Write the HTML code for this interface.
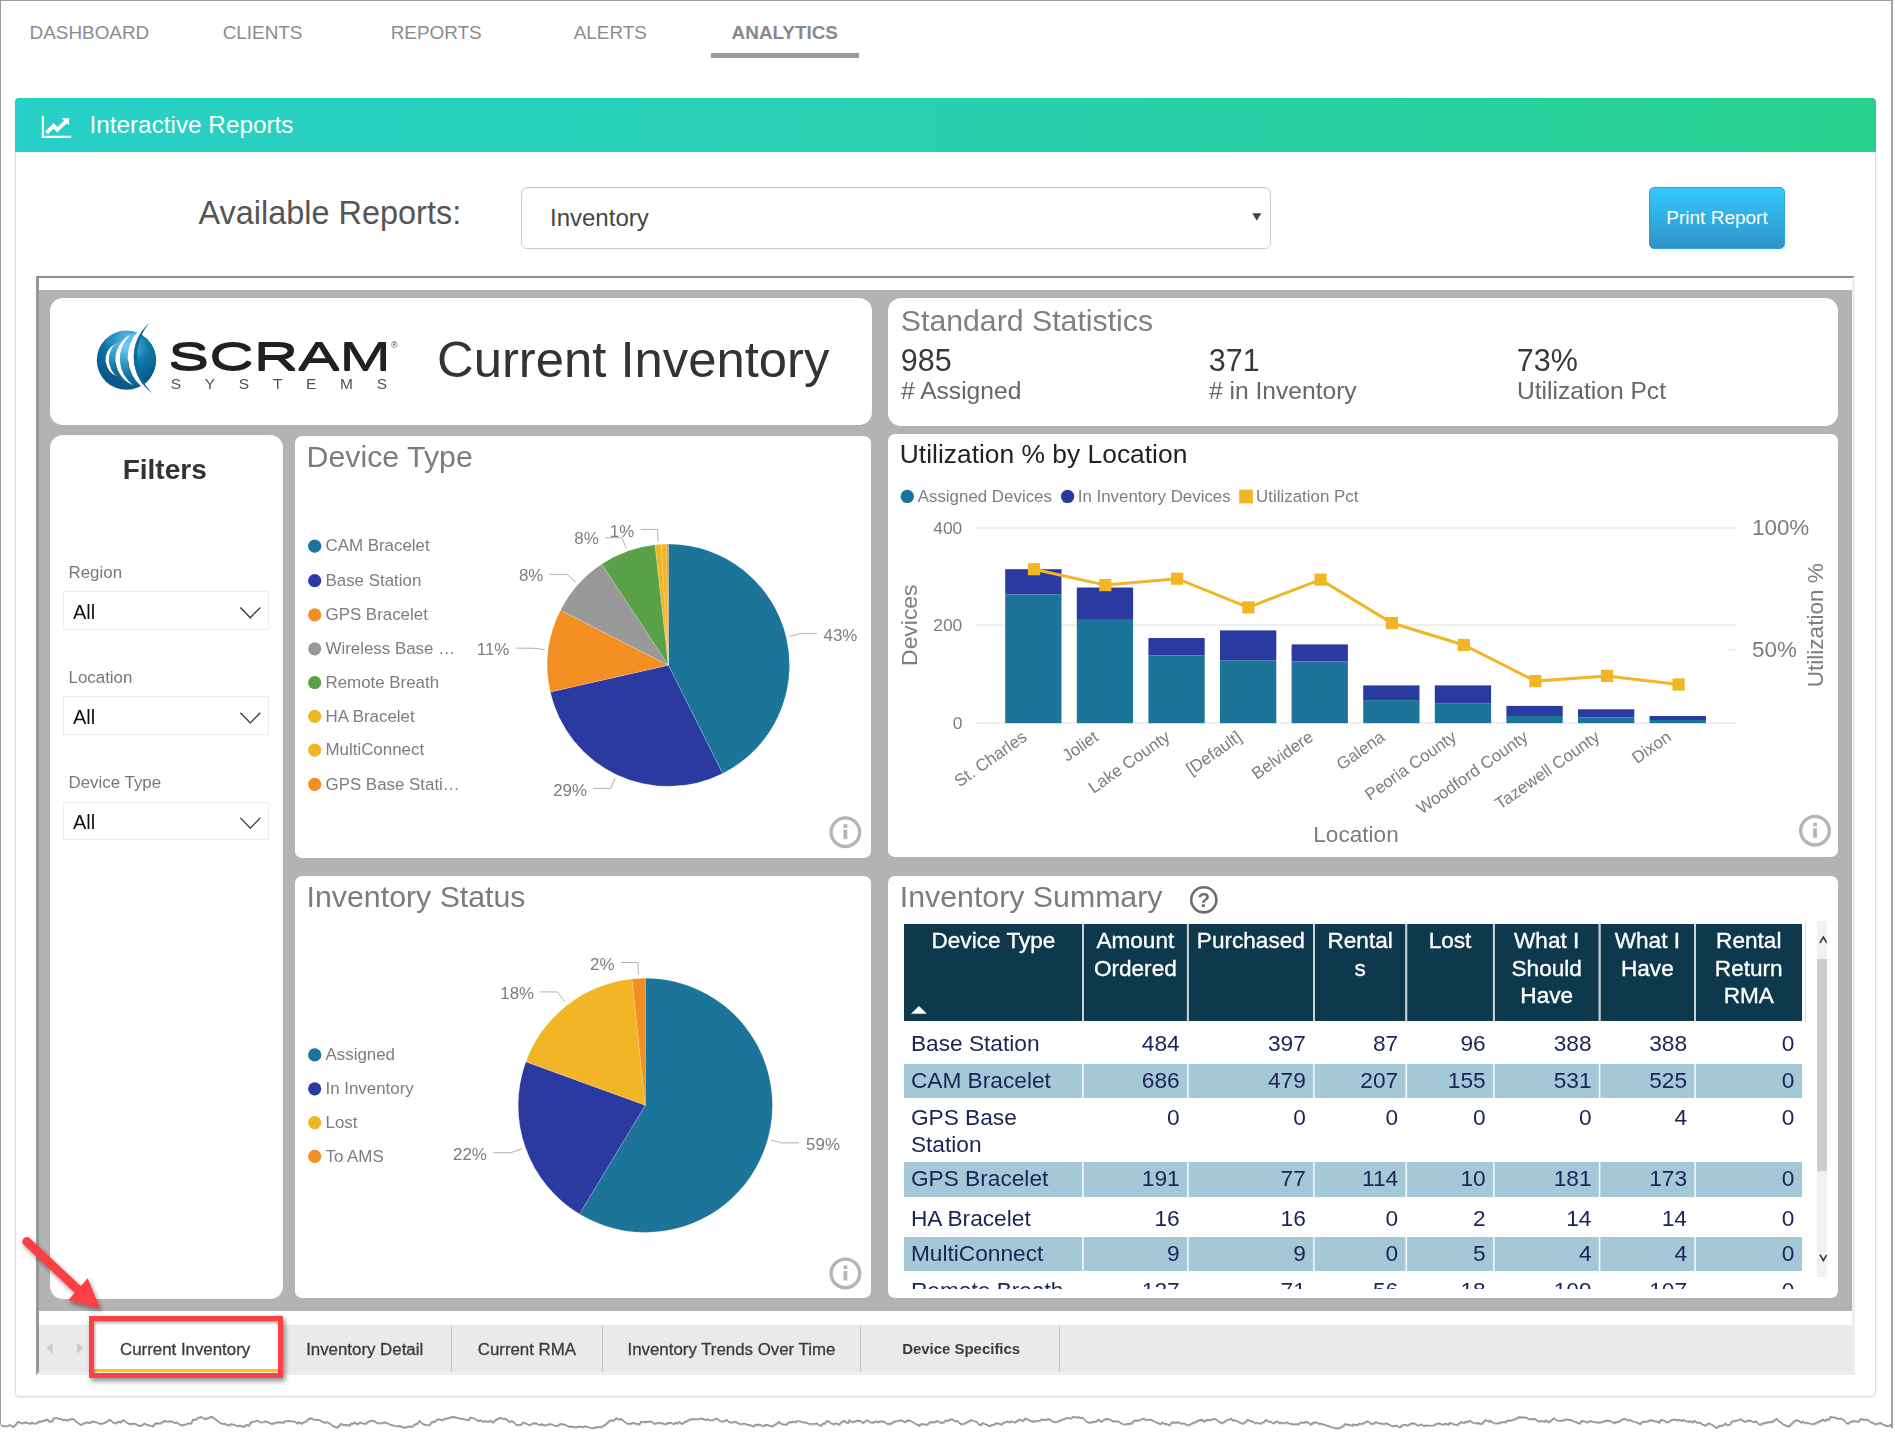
<!DOCTYPE html><html lang="en"><head><meta charset="utf-8"><title>Interactive Reports - Current Inventory</title>
<style>html,body{margin:0;padding:0;background:#fff;}body{width:1895px;height:1438px;position:relative;overflow:hidden;font-family:"Liberation Sans", sans-serif;}svg{position:absolute;left:0;top:0;overflow:visible}svg text{font-family:"Liberation Sans", sans-serif;}</style></head><body>
<div style="position:absolute;left:0.00px;top:0.00px;width:1.20px;height:1424.00px;background:#9a9a9a;"></div>
<div style="position:absolute;left:0.00px;top:0.00px;width:1892.00px;height:1.20px;background:#9a9a9a;"></div>
<div style="position:absolute;left:1891.00px;top:0.00px;width:2.00px;height:1427.00px;background:#a4a4a4;"></div>
<div style="position:absolute;top:22px;font-size:18.9px;line-height:21px;height:21px;color:#8c8c8c;white-space:nowrap;left:29.60px;">DASHBOARD</div>
<div style="position:absolute;top:22px;font-size:18.9px;line-height:21px;height:21px;color:#8c8c8c;white-space:nowrap;left:222.70px;">CLIENTS</div>
<div style="position:absolute;top:22px;font-size:18.9px;line-height:21px;height:21px;color:#8c8c8c;white-space:nowrap;left:390.70px;">REPORTS</div>
<div style="position:absolute;top:22px;font-size:18.9px;line-height:21px;height:21px;color:#8c8c8c;white-space:nowrap;left:573.70px;">ALERTS</div>
<div style="position:absolute;top:22px;font-size:18.9px;line-height:21px;height:21px;color:#888;white-space:nowrap;font-weight:700;left:731.60px;">ANALYTICS</div>
<div style="position:absolute;left:711.00px;top:53.00px;width:148.00px;height:5.00px;background:#999;"></div>
<div style="position:absolute;left:15.00px;top:98.00px;width:1861.00px;height:1299.00px;border:1px solid #ddd;box-sizing:border-box;border-radius:4px;box-shadow:0 1px 2px rgba(0,0,0,.06);"></div>
<div style="position:absolute;left:15.00px;top:98.00px;width:1861.00px;height:54.00px;background:linear-gradient(90deg,#27d0c8 0%,#27d1b0 50%,#27d28f 100%);border-radius:4px 4px 0 0;"></div>
<div style="position:absolute;top:111px;font-size:24.3px;line-height:27px;height:27px;color:#fff;white-space:nowrap;left:89.50px;">Interactive Reports</div>
<div style="position:absolute;top:195px;font-size:32.45px;line-height:36px;height:36px;color:#555;white-space:nowrap;left:198.50px;">Available Reports:</div>
<div style="position:absolute;left:521.00px;top:187.00px;width:750.00px;height:62.00px;border:1px solid #ccc;box-sizing:border-box;border-radius:6px;background:#fff;box-shadow:inset 0 1px 1px rgba(0,0,0,.05);"></div>
<div style="position:absolute;top:204px;font-size:24px;line-height:27px;height:27px;color:#444;white-space:nowrap;left:550.00px;">Inventory</div>
<div style="position:absolute;left:1649.00px;top:187.00px;width:136.00px;height:62.00px;background:linear-gradient(#33c9fd,#2f93c7);border-radius:5px;border:1px solid #2c9fd6;box-sizing:border-box;"></div>
<div style="position:absolute;top:207px;font-size:19px;line-height:21px;height:21px;color:#fff;white-space:nowrap;left:1217.00px;width:1000px;text-align:center;">Print Report</div>
<div style="position:absolute;left:0;top:0;width:1895px;height:1438px;will-change:transform;">
<div style="position:absolute;left:36.00px;top:276.00px;width:1819.00px;height:1099.00px;background:#fff;border-style:solid;border-width:2px 3px 3px 3px;border-color:#8f8f8f #efefef #efefef #979797;box-sizing:border-box;"></div>
<div style="position:absolute;left:39.00px;top:290.00px;width:1813.00px;height:1020.70px;background:#b3b3b3;"></div>
<div style="position:absolute;left:39.00px;top:1325.00px;width:1813.00px;height:47.20px;background:#eaeaea;"></div>
<div style="position:absolute;left:49.50px;top:297.70px;width:822.50px;height:127.30px;background:#fff;border-radius:13px;"></div>
<div style="position:absolute;left:888.00px;top:297.70px;width:950.30px;height:128.50px;background:#fff;border-radius:13px;"></div>
<div style="position:absolute;left:49.50px;top:435.00px;width:233.50px;height:864.00px;background:#fff;border-radius:13px;"></div>
<div style="position:absolute;left:295.20px;top:435.60px;width:575.90px;height:422.40px;background:#fff;border-radius:7px;"></div>
<div style="position:absolute;left:887.80px;top:433.90px;width:950.50px;height:423.10px;background:#fff;border-radius:7px;"></div>
<div style="position:absolute;left:295.20px;top:875.80px;width:575.90px;height:422.40px;background:#fff;border-radius:7px;"></div>
<div style="position:absolute;left:887.80px;top:875.80px;width:950.50px;height:422.40px;background:#fff;border-radius:7px;"></div>
<div style="position:absolute;left:167.6px;top:334px;font-size:39.5px;line-height:44px;color:#231f20;transform-origin:0 0;transform:scaleX(1.563);text-shadow:0 .8px 0 #231f20,0 -.8px 0 #231f20;white-space:nowrap;">SCRAM</div>
<div style="position:absolute;top:340px;font-size:8.5px;line-height:10px;height:10px;color:#444;white-space:nowrap;left:391.30px;">&reg;</div>
<div style="position:absolute;top:375px;font-size:15.5px;line-height:17px;height:17px;color:#505050;white-space:nowrap;left:170.80px;letter-spacing:23.7px;">SYSTEMS</div>
<div style="position:absolute;top:331px;font-size:50.8px;line-height:57px;height:57px;color:#333;white-space:nowrap;left:437.00px;">Current Inventory</div>
<div style="position:absolute;top:304px;font-size:30.25px;line-height:33px;height:33px;color:#808080;white-space:nowrap;left:900.80px;">Standard Statistics</div>
<div style="position:absolute;top:343px;font-size:30.5px;line-height:34px;height:34px;color:#383838;white-space:nowrap;left:900.80px;">985</div>
<div style="position:absolute;top:377px;font-size:24.6px;line-height:27px;height:27px;color:#666;white-space:nowrap;left:901.00px;"># Assigned</div>
<div style="position:absolute;top:343px;font-size:30.5px;line-height:34px;height:34px;color:#383838;white-space:nowrap;left:1208.80px;">371</div>
<div style="position:absolute;top:377px;font-size:24.6px;line-height:27px;height:27px;color:#666;white-space:nowrap;left:1209.00px;"># in Inventory</div>
<div style="position:absolute;top:343px;font-size:30.5px;line-height:34px;height:34px;color:#383838;white-space:nowrap;left:1516.80px;">73%</div>
<div style="position:absolute;top:377px;font-size:24.6px;line-height:27px;height:27px;color:#666;white-space:nowrap;left:1517.00px;">Utilization Pct</div>
<div style="position:absolute;top:454px;font-size:28px;line-height:31px;height:31px;color:#333;white-space:nowrap;font-weight:700;left:-335.30px;width:1000px;text-align:center;">Filters</div>
<div style="position:absolute;top:563px;font-size:16.9px;line-height:19px;height:19px;color:#777;white-space:nowrap;left:68.50px;">Region</div>
<div style="position:absolute;left:63.20px;top:591.20px;width:206.30px;height:38.80px;border:1.5px solid #ededed;box-sizing:border-box;background:#fff;"></div>
<div style="position:absolute;top:601px;font-size:20px;line-height:22px;height:22px;color:#111;white-space:nowrap;left:73.00px;">All</div>
<div style="position:absolute;top:668px;font-size:16.9px;line-height:19px;height:19px;color:#777;white-space:nowrap;left:68.50px;">Location</div>
<div style="position:absolute;left:63.20px;top:696.40px;width:206.30px;height:38.80px;border:1.5px solid #ededed;box-sizing:border-box;background:#fff;"></div>
<div style="position:absolute;top:706px;font-size:20px;line-height:22px;height:22px;color:#111;white-space:nowrap;left:73.00px;">All</div>
<div style="position:absolute;top:773px;font-size:16.9px;line-height:19px;height:19px;color:#777;white-space:nowrap;left:68.50px;">Device Type</div>
<div style="position:absolute;left:63.20px;top:801.60px;width:206.30px;height:38.80px;border:1.5px solid #ededed;box-sizing:border-box;background:#fff;"></div>
<div style="position:absolute;top:811px;font-size:20px;line-height:22px;height:22px;color:#111;white-space:nowrap;left:73.00px;">All</div>
<div style="position:absolute;top:440px;font-size:30.3px;line-height:33px;height:33px;color:#7c7c7c;white-space:nowrap;left:306.60px;">Device Type</div>
<div style="position:absolute;top:439px;font-size:26.4px;line-height:30px;height:30px;color:#222;white-space:nowrap;left:899.80px;">Utilization % by Location</div>
<div style="position:absolute;top:880px;font-size:30.3px;line-height:33px;height:33px;color:#7c7c7c;white-space:nowrap;left:306.60px;">Inventory Status</div>
<div style="position:absolute;top:880px;font-size:30.3px;line-height:33px;height:33px;color:#7c7c7c;white-space:nowrap;left:899.80px;">Inventory Summary</div>
<div style="position:absolute;left:904.00px;top:924.00px;width:898.40px;height:97.00px;background:#0e384b;"></div>
<div style="position:absolute;top:928px;font-size:22.6px;line-height:25px;height:25px;color:#fff;white-space:nowrap;left:493.45px;width:1000px;text-align:center;-webkit-text-stroke:0.35px #fff;">Device Type</div>
<div style="position:absolute;top:928px;font-size:22.6px;line-height:25px;height:25px;color:#fff;white-space:nowrap;left:635.35px;width:1000px;text-align:center;-webkit-text-stroke:0.35px #fff;">Amount</div>
<div style="position:absolute;top:956px;font-size:22.6px;line-height:25px;height:25px;color:#fff;white-space:nowrap;left:635.35px;width:1000px;text-align:center;-webkit-text-stroke:0.35px #fff;">Ordered</div>
<div style="position:absolute;top:928px;font-size:22.6px;line-height:25px;height:25px;color:#fff;white-space:nowrap;left:750.85px;width:1000px;text-align:center;-webkit-text-stroke:0.35px #fff;">Purchased</div>
<div style="position:absolute;top:928px;font-size:22.6px;line-height:25px;height:25px;color:#fff;white-space:nowrap;left:860.10px;width:1000px;text-align:center;-webkit-text-stroke:0.35px #fff;">Rental</div>
<div style="position:absolute;top:956px;font-size:22.6px;line-height:25px;height:25px;color:#fff;white-space:nowrap;left:860.10px;width:1000px;text-align:center;-webkit-text-stroke:0.35px #fff;">s</div>
<div style="position:absolute;top:928px;font-size:22.6px;line-height:25px;height:25px;color:#fff;white-space:nowrap;left:950.05px;width:1000px;text-align:center;-webkit-text-stroke:0.35px #fff;">Lost</div>
<div style="position:absolute;top:928px;font-size:22.6px;line-height:25px;height:25px;color:#fff;white-space:nowrap;left:1046.70px;width:1000px;text-align:center;-webkit-text-stroke:0.35px #fff;">What I</div>
<div style="position:absolute;top:956px;font-size:22.6px;line-height:25px;height:25px;color:#fff;white-space:nowrap;left:1046.70px;width:1000px;text-align:center;-webkit-text-stroke:0.35px #fff;">Should</div>
<div style="position:absolute;top:983px;font-size:22.6px;line-height:25px;height:25px;color:#fff;white-space:nowrap;left:1046.70px;width:1000px;text-align:center;-webkit-text-stroke:0.35px #fff;">Have</div>
<div style="position:absolute;top:928px;font-size:22.6px;line-height:25px;height:25px;color:#fff;white-space:nowrap;left:1147.35px;width:1000px;text-align:center;-webkit-text-stroke:0.35px #fff;">What I</div>
<div style="position:absolute;top:956px;font-size:22.6px;line-height:25px;height:25px;color:#fff;white-space:nowrap;left:1147.35px;width:1000px;text-align:center;-webkit-text-stroke:0.35px #fff;">Have</div>
<div style="position:absolute;top:928px;font-size:22.6px;line-height:25px;height:25px;color:#fff;white-space:nowrap;left:1248.75px;width:1000px;text-align:center;-webkit-text-stroke:0.35px #fff;">Rental</div>
<div style="position:absolute;top:956px;font-size:22.6px;line-height:25px;height:25px;color:#fff;white-space:nowrap;left:1248.75px;width:1000px;text-align:center;-webkit-text-stroke:0.35px #fff;">Return</div>
<div style="position:absolute;top:983px;font-size:22.6px;line-height:25px;height:25px;color:#fff;white-space:nowrap;left:1248.75px;width:1000px;text-align:center;-webkit-text-stroke:0.35px #fff;">RMA</div>
<div style="position:absolute;left:0;top:0;width:1895px;height:1289.1px;overflow:hidden;">
<div style="position:absolute;top:1030px;font-size:22.7px;line-height:26px;height:26px;color:#1a2456;white-space:nowrap;left:910.90px;">Base Station</div>
<div style="position:absolute;top:1030px;font-size:22.7px;line-height:26px;height:26px;color:#1a2456;white-space:nowrap;right:715.30px;text-align:right;">484</div>
<div style="position:absolute;top:1030px;font-size:22.7px;line-height:26px;height:26px;color:#1a2456;white-space:nowrap;right:589.20px;text-align:right;">397</div>
<div style="position:absolute;top:1030px;font-size:22.7px;line-height:26px;height:26px;color:#1a2456;white-space:nowrap;right:496.80px;text-align:right;">87</div>
<div style="position:absolute;top:1030px;font-size:22.7px;line-height:26px;height:26px;color:#1a2456;white-space:nowrap;right:409.30px;text-align:right;">96</div>
<div style="position:absolute;top:1030px;font-size:22.7px;line-height:26px;height:26px;color:#1a2456;white-space:nowrap;right:303.50px;text-align:right;">388</div>
<div style="position:absolute;top:1030px;font-size:22.7px;line-height:26px;height:26px;color:#1a2456;white-space:nowrap;right:208.00px;text-align:right;">388</div>
<div style="position:absolute;top:1030px;font-size:22.7px;line-height:26px;height:26px;color:#1a2456;white-space:nowrap;right:100.70px;text-align:right;">0</div>
<div style="position:absolute;left:904.00px;top:1063.90px;width:898.40px;height:34.00px;background:#a5c8d8;"></div>
<div style="position:absolute;top:1067px;font-size:22.7px;line-height:26px;height:26px;color:#1a2456;white-space:nowrap;left:910.90px;">CAM Bracelet</div>
<div style="position:absolute;top:1067px;font-size:22.7px;line-height:26px;height:26px;color:#1a2456;white-space:nowrap;right:715.30px;text-align:right;">686</div>
<div style="position:absolute;top:1067px;font-size:22.7px;line-height:26px;height:26px;color:#1a2456;white-space:nowrap;right:589.20px;text-align:right;">479</div>
<div style="position:absolute;top:1067px;font-size:22.7px;line-height:26px;height:26px;color:#1a2456;white-space:nowrap;right:496.80px;text-align:right;">207</div>
<div style="position:absolute;top:1067px;font-size:22.7px;line-height:26px;height:26px;color:#1a2456;white-space:nowrap;right:409.30px;text-align:right;">155</div>
<div style="position:absolute;top:1067px;font-size:22.7px;line-height:26px;height:26px;color:#1a2456;white-space:nowrap;right:303.50px;text-align:right;">531</div>
<div style="position:absolute;top:1067px;font-size:22.7px;line-height:26px;height:26px;color:#1a2456;white-space:nowrap;right:208.00px;text-align:right;">525</div>
<div style="position:absolute;top:1067px;font-size:22.7px;line-height:26px;height:26px;color:#1a2456;white-space:nowrap;right:100.70px;text-align:right;">0</div>
<div style="position:absolute;top:1104px;font-size:22.7px;line-height:26px;height:26px;color:#1a2456;white-space:nowrap;left:910.90px;">GPS Base</div>
<div style="position:absolute;top:1104px;font-size:22.7px;line-height:26px;height:26px;color:#1a2456;white-space:nowrap;right:715.30px;text-align:right;">0</div>
<div style="position:absolute;top:1104px;font-size:22.7px;line-height:26px;height:26px;color:#1a2456;white-space:nowrap;right:589.20px;text-align:right;">0</div>
<div style="position:absolute;top:1104px;font-size:22.7px;line-height:26px;height:26px;color:#1a2456;white-space:nowrap;right:496.80px;text-align:right;">0</div>
<div style="position:absolute;top:1104px;font-size:22.7px;line-height:26px;height:26px;color:#1a2456;white-space:nowrap;right:409.30px;text-align:right;">0</div>
<div style="position:absolute;top:1104px;font-size:22.7px;line-height:26px;height:26px;color:#1a2456;white-space:nowrap;right:303.50px;text-align:right;">0</div>
<div style="position:absolute;top:1104px;font-size:22.7px;line-height:26px;height:26px;color:#1a2456;white-space:nowrap;right:208.00px;text-align:right;">4</div>
<div style="position:absolute;top:1104px;font-size:22.7px;line-height:26px;height:26px;color:#1a2456;white-space:nowrap;right:100.70px;text-align:right;">0</div>
<div style="position:absolute;left:904.00px;top:1162.10px;width:898.40px;height:35.20px;background:#a5c8d8;"></div>
<div style="position:absolute;top:1165px;font-size:22.7px;line-height:26px;height:26px;color:#1a2456;white-space:nowrap;left:910.90px;">GPS Bracelet</div>
<div style="position:absolute;top:1165px;font-size:22.7px;line-height:26px;height:26px;color:#1a2456;white-space:nowrap;right:715.30px;text-align:right;">191</div>
<div style="position:absolute;top:1165px;font-size:22.7px;line-height:26px;height:26px;color:#1a2456;white-space:nowrap;right:589.20px;text-align:right;">77</div>
<div style="position:absolute;top:1165px;font-size:22.7px;line-height:26px;height:26px;color:#1a2456;white-space:nowrap;right:496.80px;text-align:right;">114</div>
<div style="position:absolute;top:1165px;font-size:22.7px;line-height:26px;height:26px;color:#1a2456;white-space:nowrap;right:409.30px;text-align:right;">10</div>
<div style="position:absolute;top:1165px;font-size:22.7px;line-height:26px;height:26px;color:#1a2456;white-space:nowrap;right:303.50px;text-align:right;">181</div>
<div style="position:absolute;top:1165px;font-size:22.7px;line-height:26px;height:26px;color:#1a2456;white-space:nowrap;right:208.00px;text-align:right;">173</div>
<div style="position:absolute;top:1165px;font-size:22.7px;line-height:26px;height:26px;color:#1a2456;white-space:nowrap;right:100.70px;text-align:right;">0</div>
<div style="position:absolute;top:1205px;font-size:22.7px;line-height:26px;height:26px;color:#1a2456;white-space:nowrap;left:910.90px;">HA Bracelet</div>
<div style="position:absolute;top:1205px;font-size:22.7px;line-height:26px;height:26px;color:#1a2456;white-space:nowrap;right:715.30px;text-align:right;">16</div>
<div style="position:absolute;top:1205px;font-size:22.7px;line-height:26px;height:26px;color:#1a2456;white-space:nowrap;right:589.20px;text-align:right;">16</div>
<div style="position:absolute;top:1205px;font-size:22.7px;line-height:26px;height:26px;color:#1a2456;white-space:nowrap;right:496.80px;text-align:right;">0</div>
<div style="position:absolute;top:1205px;font-size:22.7px;line-height:26px;height:26px;color:#1a2456;white-space:nowrap;right:409.30px;text-align:right;">2</div>
<div style="position:absolute;top:1205px;font-size:22.7px;line-height:26px;height:26px;color:#1a2456;white-space:nowrap;right:303.50px;text-align:right;">14</div>
<div style="position:absolute;top:1205px;font-size:22.7px;line-height:26px;height:26px;color:#1a2456;white-space:nowrap;right:208.00px;text-align:right;">14</div>
<div style="position:absolute;top:1205px;font-size:22.7px;line-height:26px;height:26px;color:#1a2456;white-space:nowrap;right:100.70px;text-align:right;">0</div>
<div style="position:absolute;left:904.00px;top:1237.20px;width:898.40px;height:33.50px;background:#a5c8d8;"></div>
<div style="position:absolute;top:1240px;font-size:22.7px;line-height:26px;height:26px;color:#1a2456;white-space:nowrap;left:910.90px;">MultiConnect</div>
<div style="position:absolute;top:1240px;font-size:22.7px;line-height:26px;height:26px;color:#1a2456;white-space:nowrap;right:715.30px;text-align:right;">9</div>
<div style="position:absolute;top:1240px;font-size:22.7px;line-height:26px;height:26px;color:#1a2456;white-space:nowrap;right:589.20px;text-align:right;">9</div>
<div style="position:absolute;top:1240px;font-size:22.7px;line-height:26px;height:26px;color:#1a2456;white-space:nowrap;right:496.80px;text-align:right;">0</div>
<div style="position:absolute;top:1240px;font-size:22.7px;line-height:26px;height:26px;color:#1a2456;white-space:nowrap;right:409.30px;text-align:right;">5</div>
<div style="position:absolute;top:1240px;font-size:22.7px;line-height:26px;height:26px;color:#1a2456;white-space:nowrap;right:303.50px;text-align:right;">4</div>
<div style="position:absolute;top:1240px;font-size:22.7px;line-height:26px;height:26px;color:#1a2456;white-space:nowrap;right:208.00px;text-align:right;">4</div>
<div style="position:absolute;top:1240px;font-size:22.7px;line-height:26px;height:26px;color:#1a2456;white-space:nowrap;right:100.70px;text-align:right;">0</div>
<div style="position:absolute;top:1277px;font-size:22.7px;line-height:26px;height:26px;color:#1a2456;white-space:nowrap;left:910.90px;">Remote Breath</div>
<div style="position:absolute;top:1277px;font-size:22.7px;line-height:26px;height:26px;color:#1a2456;white-space:nowrap;right:715.30px;text-align:right;">127</div>
<div style="position:absolute;top:1277px;font-size:22.7px;line-height:26px;height:26px;color:#1a2456;white-space:nowrap;right:589.20px;text-align:right;">71</div>
<div style="position:absolute;top:1277px;font-size:22.7px;line-height:26px;height:26px;color:#1a2456;white-space:nowrap;right:496.80px;text-align:right;">56</div>
<div style="position:absolute;top:1277px;font-size:22.7px;line-height:26px;height:26px;color:#1a2456;white-space:nowrap;right:409.30px;text-align:right;">18</div>
<div style="position:absolute;top:1277px;font-size:22.7px;line-height:26px;height:26px;color:#1a2456;white-space:nowrap;right:303.50px;text-align:right;">109</div>
<div style="position:absolute;top:1277px;font-size:22.7px;line-height:26px;height:26px;color:#1a2456;white-space:nowrap;right:208.00px;text-align:right;">107</div>
<div style="position:absolute;top:1277px;font-size:22.7px;line-height:26px;height:26px;color:#1a2456;white-space:nowrap;right:100.70px;text-align:right;">0</div>
<div style="position:absolute;top:1131px;font-size:22.7px;line-height:26px;height:26px;color:#1a2456;white-space:nowrap;left:910.90px;">Station</div>
</div>
<div style="position:absolute;left:1804.80px;top:921.10px;width:1.00px;height:100.90px;background:#d3dade;"></div>
<div style="position:absolute;left:1817.20px;top:921.10px;width:9.60px;height:355.80px;background:#f1f1f1;"></div>
<div style="position:absolute;left:1817.20px;top:959.10px;width:9.60px;height:212.20px;background:#cdcdcd;"></div>
<div style="position:absolute;left:94.00px;top:1321.60px;width:184.20px;height:50.60px;background:#fff;"></div>
<div style="position:absolute;left:94.00px;top:1369.20px;width:184.20px;height:3.00px;background:#f2c811;"></div>
<div style="position:absolute;top:1340px;font-size:16.85px;line-height:19px;height:19px;color:#3b3b3b;white-space:nowrap;left:-314.90px;width:1000px;text-align:center;-webkit-text-stroke:0.3px #3b3b3b;">Current Inventory</div>
<div style="position:absolute;top:1340px;font-size:16.85px;line-height:19px;height:19px;color:#3b3b3b;white-space:nowrap;left:-135.35px;width:1000px;text-align:center;-webkit-text-stroke:0.3px #3b3b3b;">Inventory Detail</div>
<div style="position:absolute;top:1340px;font-size:16.85px;line-height:19px;height:19px;color:#3b3b3b;white-space:nowrap;left:26.90px;width:1000px;text-align:center;-webkit-text-stroke:0.3px #3b3b3b;">Current RMA</div>
<div style="position:absolute;top:1340px;font-size:16.85px;line-height:19px;height:19px;color:#3b3b3b;white-space:nowrap;left:231.45px;width:1000px;text-align:center;-webkit-text-stroke:0.3px #3b3b3b;">Inventory Trends Over Time</div>
<div style="position:absolute;top:1340px;font-size:14.95px;line-height:17px;height:17px;color:#3b3b3b;white-space:nowrap;font-weight:700;left:461.20px;width:1000px;text-align:center;">Device Specifics</div>
<div style="position:absolute;left:450.70px;top:1324.80px;width:1.00px;height:46.90px;background:#c6c6c6;"></div>
<div style="position:absolute;left:602.00px;top:1324.80px;width:1.00px;height:46.90px;background:#c6c6c6;"></div>
<div style="position:absolute;left:860.00px;top:1324.80px;width:1.00px;height:46.90px;background:#c6c6c6;"></div>
<div style="position:absolute;left:1059.30px;top:1324.80px;width:1.00px;height:46.90px;background:#c6c6c6;"></div>
<div style="position:absolute;left:89.00px;top:1315.80px;width:194.20px;height:62.60px;border:5px solid #fb4145;box-sizing:border-box;box-shadow:2px 3px 5px rgba(0,0,0,.45), inset 1px 2px 3px rgba(0,0,0,.35);"></div>
<svg width="1895" height="1438" viewBox="0 0 1895 1438">
<defs>
<filter id="sh" x="-30%" y="-30%" width="160%" height="160%"><feDropShadow dx="1.5" dy="2.5" stdDeviation="2" flood-color="#000" flood-opacity=".45"/></filter>
</defs>
<g fill="none" stroke="#fff"><path d="M42.85 115.8V136.9H71.05" stroke-width="2.2"/><path d="M46.4 133L53.7 125.9L57.2 129.8L66.4 121.1" stroke-width="3.9"/></g><path d="M61.7 118.2H69.05V125.3Z" fill="#fff"/>
<path d="M1252.3 213.3H1261.3L1256.8 220.8Z" fill="#444"/>
<path d="M240.4 607.5L250.3 617.7L260.3 607.5" fill="none" stroke="#333" stroke-width="1.3"/>
<path d="M240.4 712.7L250.3 722.9L260.3 712.7" fill="none" stroke="#333" stroke-width="1.3"/>
<path d="M240.4 817.9L250.3 828.1L260.3 817.9" fill="none" stroke="#333" stroke-width="1.3"/>
<defs>
<radialGradient id="sph" gradientUnits="userSpaceOnUse" cx="127" cy="338" r="44"><stop offset="0" stop-color="#58b8e5"/><stop offset="0.3" stop-color="#2f94c6"/><stop offset="0.62" stop-color="#0a6c9b"/><stop offset="1" stop-color="#065a86"/></radialGradient>
<linearGradient id="band" gradientUnits="userSpaceOnUse" x1="0" y1="334" x2="0" y2="386"><stop offset="0" stop-color="#58bdea"/><stop offset="0.25" stop-color="#6ccbf5"/><stop offset="0.52" stop-color="#3a9fce"/><stop offset="0.78" stop-color="#1175a5"/><stop offset="1" stop-color="#086593"/></linearGradient>
<linearGradient id="band1" gradientUnits="userSpaceOnUse" x1="0" y1="344" x2="0" y2="380"><stop offset="0" stop-color="#4fb4e2"/><stop offset="0.4" stop-color="#2b92c4"/><stop offset="0.72" stop-color="#0e6e9e"/><stop offset="1" stop-color="#086593"/></linearGradient>
<radialGradient id="lens" gradientUnits="userSpaceOnUse" cx="134" cy="348" r="34"><stop offset="0" stop-color="#4aa9d4"/><stop offset="0.45" stop-color="#0f78a6"/><stop offset="1" stop-color="#045a85"/></radialGradient>
<clipPath id="cc"><circle cx="126.4" cy="360.2" r="29.6"/></clipPath>
</defs>
<circle cx="126.4" cy="360.2" r="29.6" fill="url(#sph)"/>
<g clip-path="url(#cc)">
<path d="M115.1 344A22.25 22.25 0 0 0 117.2 376.8L133.8 385.7A27.9 27.9 0 0 1 130.8 334.5Z" fill="url(#band1)"/>
<path d="M130.8 334.5A32.7 32.7 0 0 0 133.8 385.7L140.6 386A38.1 38.1 0 0 1 137.3 332.1Z" fill="url(#band)"/>
<path d="M149.7 322.4A45.3 45.3 0 0 0 152.7 393.7L175 394L175 322Z" fill="url(#lens)"/>
<path d="M115.1 344A18 18 0 0 0 117.2 376.8A22.25 22.25 0 0 1 115.1 344Z" fill="#fff"/>
<path d="M130.8 334.5A27.9 27.9 0 0 0 133.8 385.7A32.7 32.7 0 0 1 130.8 334.5Z" fill="#fff"/>
<path d="M137.3 332.1A38.1 38.1 0 0 0 140.6 386L152.7 393.7A45.3 45.3 0 0 1 149.7 322.4Z" fill="#fff"/>
<path d="M105.6 363A18 18 0 0 0 117.2 376.8" fill="none" stroke="#1a1a1a" stroke-width=".6" opacity=".75"/>
<path d="M115.5 363A27.9 27.9 0 0 0 133.8 385.7" fill="none" stroke="#1a1a1a" stroke-width=".6" opacity=".75"/>
<path d="M128 361A38.1 38.1 0 0 0 140.6 386" fill="none" stroke="#1a1a1a" stroke-width=".6" opacity=".75"/>
</g>
<path d="M149.7 322.4A45.3 45.3 0 0 0 152.7 393.7A52.5 52.5 0 0 1 149.7 322.4Z" fill="#0b6b9a"/>
<path d="M668.40 665.20L668.40 544.10A121.1 121.1 0 0 1 722.62 773.48Z" fill="#1c7598" stroke="#fff" stroke-opacity=".3" stroke-width=".6"/>
<path d="M668.40 665.20L722.62 773.48A121.1 121.1 0 0 1 550.31 692.03Z" fill="#2b3aa1" stroke="#fff" stroke-opacity=".3" stroke-width=".6"/>
<path d="M668.40 665.20L550.31 692.03A121.1 121.1 0 0 1 560.50 610.22Z" fill="#f28e22" stroke="#fff" stroke-opacity=".3" stroke-width=".6"/>
<path d="M668.40 665.20L560.50 610.22A121.1 121.1 0 0 1 601.74 564.10Z" fill="#999999" stroke="#fff" stroke-opacity=".3" stroke-width=".6"/>
<path d="M668.40 665.20L601.74 564.10A121.1 121.1 0 0 1 655.11 544.83Z" fill="#5aa046" stroke="#fff" stroke-opacity=".3" stroke-width=".6"/>
<path d="M668.40 665.20L655.11 544.83A121.1 121.1 0 0 1 661.22 544.31Z" fill="#f2b525" stroke="#fff" stroke-opacity=".3" stroke-width=".6"/>
<path d="M668.40 665.20L661.22 544.31A121.1 121.1 0 0 1 666.71 544.11Z" fill="#f2b525" stroke="#fff" stroke-opacity=".3" stroke-width=".6"/>
<path d="M668.40 665.20L666.71 544.11A121.1 121.1 0 0 1 668.40 544.10Z" fill="#f28e22" stroke="#fff" stroke-opacity=".3" stroke-width=".6"/>
<path d="M645.30 1105.30L645.30 978.20A127.1 127.1 0 1 1 579.46 1214.02Z" fill="#1c7598" stroke="#fff" stroke-opacity=".3" stroke-width=".6"/>
<path d="M645.30 1105.30L579.46 1214.02A127.1 127.1 0 0 1 525.87 1061.83Z" fill="#2b3aa1" stroke="#fff" stroke-opacity=".3" stroke-width=".6"/>
<path d="M645.30 1105.30L525.87 1061.83A127.1 127.1 0 0 1 632.01 978.90Z" fill="#f2b525" stroke="#fff" stroke-opacity=".3" stroke-width=".6"/>
<path d="M645.30 1105.30L632.01 978.90A127.1 127.1 0 0 1 645.30 978.20Z" fill="#f28e22" stroke="#fff" stroke-opacity=".3" stroke-width=".6"/>
<path d="M789.3 636.4L800.4 633.6L817.2 633.6" fill="none" stroke="#b0b0b0" stroke-width="1"/>
<text x="823.5" y="641.1" font-size="16.9" fill="#7d7d7d" text-anchor="start">43%</text>
<path d="M615.2 778.3L610.7 788.4L593.3 788.4" fill="none" stroke="#b0b0b0" stroke-width="1"/>
<text x="587.0" y="795.6" font-size="16.9" fill="#7d7d7d" text-anchor="end">29%</text>
<path d="M544.9 649.7L533.2 648.2L516.1 648.2" fill="none" stroke="#b0b0b0" stroke-width="1"/>
<text x="509.4" y="655.0" font-size="16.9" fill="#7d7d7d" text-anchor="end">11%</text>
<path d="M575.9 582.3L567.4 574.4L549.6 574.4" fill="none" stroke="#b0b0b0" stroke-width="1"/>
<text x="543.3" y="581.2" font-size="16.9" fill="#7d7d7d" text-anchor="end">8%</text>
<path d="M626.3 548.1L621.8 537.7L605.0 537.7" fill="none" stroke="#b0b0b0" stroke-width="1"/>
<text x="598.7" y="544.2" font-size="16.9" fill="#7d7d7d" text-anchor="end">8%</text>
<path d="M658.2 541.5L657.6 529.4L640.8 529.4" fill="none" stroke="#b0b0b0" stroke-width="1"/>
<text x="634.2" y="536.6" font-size="16.9" fill="#7d7d7d" text-anchor="end">1%</text>
<path d="M771.0 1140.1L781.7 1142.9L799.1 1142.9" fill="none" stroke="#b0b0b0" stroke-width="1"/>
<text x="806.1" y="1150.1" font-size="16.9" fill="#7d7d7d" text-anchor="start">59%</text>
<path d="M522.1 1148.6L510.7 1152.7L493.3 1152.7" fill="none" stroke="#b0b0b0" stroke-width="1"/>
<text x="486.9" y="1160.2" font-size="16.9" fill="#7d7d7d" text-anchor="end">22%</text>
<path d="M564.8 1001.7L557.5 991.9L540.1 991.9" fill="none" stroke="#b0b0b0" stroke-width="1"/>
<text x="534.1" y="999.1" font-size="16.9" fill="#7d7d7d" text-anchor="end">18%</text>
<path d="M638.3 974.5L638.0 962.5L620.9 962.5" fill="none" stroke="#b0b0b0" stroke-width="1"/>
<text x="614.5" y="969.6" font-size="16.9" fill="#7d7d7d" text-anchor="end">2%</text>
<circle cx="314.7" cy="546.2" r="6.6" fill="#1c7598"/><text x="325.5" y="551.4" font-size="16.9" fill="#7d7d7d">CAM Bracelet</text>
<circle cx="314.7" cy="580.7" r="6.6" fill="#2b3aa1"/><text x="325.5" y="585.9" font-size="16.9" fill="#7d7d7d">Base Station</text>
<circle cx="314.7" cy="614.9" r="6.6" fill="#f28e22"/><text x="325.5" y="620.1" font-size="16.9" fill="#7d7d7d">GPS Bracelet</text>
<circle cx="314.7" cy="648.8" r="6.6" fill="#999999"/><text x="325.5" y="654.0" font-size="16.9" fill="#7d7d7d">Wireless Base …</text>
<circle cx="314.7" cy="682.7" r="6.6" fill="#5aa046"/><text x="325.5" y="687.9" font-size="16.9" fill="#7d7d7d">Remote Breath</text>
<circle cx="314.7" cy="716.3" r="6.6" fill="#f2b525"/><text x="325.5" y="721.5" font-size="16.9" fill="#7d7d7d">HA Bracelet</text>
<circle cx="314.7" cy="750.1" r="6.6" fill="#f2b525"/><text x="325.5" y="755.3" font-size="16.9" fill="#7d7d7d">MultiConnect</text>
<circle cx="314.7" cy="784.3" r="6.6" fill="#f28e22"/><text x="325.5" y="789.5" font-size="16.9" fill="#7d7d7d">GPS Base Stati…</text>
<circle cx="314.7" cy="1054.9" r="6.6" fill="#1c7598"/><text x="325.5" y="1060.1" font-size="16.9" fill="#7d7d7d">Assigned</text>
<circle cx="314.7" cy="1088.8" r="6.6" fill="#2b3aa1"/><text x="325.5" y="1094.0" font-size="16.9" fill="#7d7d7d">In Inventory</text>
<circle cx="314.7" cy="1122.7" r="6.6" fill="#f2b525"/><text x="325.5" y="1127.9" font-size="16.9" fill="#7d7d7d">Lost</text>
<circle cx="314.7" cy="1156.3" r="6.6" fill="#f28e22"/><text x="325.5" y="1161.5" font-size="16.9" fill="#7d7d7d">To AMS</text>
<circle cx="845.4" cy="832.2" r="14.3" fill="none" stroke="#b5b5b5" stroke-width="3.4"/><rect x="843.5" y="829.7" width="3.8" height="9.5" fill="#b5b5b5"/><rect x="843.5" y="824.2" width="3.8" height="3.6" fill="#b5b5b5"/>
<circle cx="845.4" cy="1273.4" r="14.3" fill="none" stroke="#b5b5b5" stroke-width="3.4"/><rect x="843.5" y="1270.9" width="3.8" height="9.5" fill="#b5b5b5"/><rect x="843.5" y="1265.4" width="3.8" height="3.6" fill="#b5b5b5"/>
<circle cx="1815" cy="830.7" r="14.3" fill="none" stroke="#b5b5b5" stroke-width="3.4"/><rect x="1813.1" y="828.2" width="3.8" height="9.5" fill="#b5b5b5"/><rect x="1813.1" y="822.7" width="3.8" height="3.6" fill="#b5b5b5"/>
<circle cx="1203.8" cy="899.8" r="12.6" fill="none" stroke="#6e6e6e" stroke-width="2.6"/><text x="1203.8" y="907.2" font-size="20.5" font-weight="700" fill="#6e6e6e" text-anchor="middle">?</text>
<circle cx="907.3" cy="496.4" r="6.7" fill="#1c7598"/><text x="917.7" y="501.9" font-size="16.9" fill="#7d7d7d">Assigned Devices</text>
<circle cx="1067.6" cy="496.4" r="6.7" fill="#2b3aa1"/><text x="1077.7" y="501.9" font-size="16.9" fill="#7d7d7d">In Inventory Devices</text>
<rect x="1239.2" y="489.7" width="13.7" height="13.7" fill="#f2b525"/><text x="1256.1" y="501.9" font-size="16.9" fill="#7d7d7d">Utilization Pct</text>
<rect x="976.2" y="527.4" width="759.8" height="1.2" fill="#e6e6e6"/>
<rect x="976.2" y="624.5" width="759.8" height="1.2" fill="#e6e6e6"/>
<rect x="976.2" y="722.5" width="759.8" height="1.2" fill="#e6e6e6"/>
<rect x="1727.5" y="649" width="8.5" height="1.2" fill="#e6e6e6"/>
<text x="962.3" y="534.4" font-size="17.4" fill="#7d7d7d" text-anchor="end">400</text>
<text x="962.3" y="631.4" font-size="17.4" fill="#7d7d7d" text-anchor="end">200</text>
<text x="962.3" y="729.4" font-size="17.4" fill="#7d7d7d" text-anchor="end">0</text>
<text x="1752" y="535.1" font-size="22.4" fill="#7d7d7d">100%</text>
<text x="1752" y="656.8" font-size="22.4" fill="#7d7d7d">50%</text>
<text transform="translate(917.3 625.2) rotate(-90)" font-size="22.9" fill="#7d7d7d" text-anchor="middle">Devices</text>
<text transform="translate(1823.2 625.2) rotate(-90)" font-size="22.6" fill="#7d7d7d" text-anchor="middle">Utilization %</text>
<text x="1356" y="842.4" font-size="22.6" fill="#7d7d7d" text-anchor="middle">Location</text>
<rect x="1005.2" y="569.2" width="56.3" height="25.4" fill="#2b3aa1"/><rect x="1005.2" y="594.6" width="56.3" height="128.5" fill="#1c7598"/>
<text transform="translate(1028.0 739.5) rotate(-35)" font-size="16.9" fill="#7d7d7d" text-anchor="end">St. Charles</text>
<rect x="1076.8" y="587.5" width="56.3" height="31.5" fill="#2b3aa1"/><rect x="1076.8" y="619.0" width="56.3" height="104.1" fill="#1c7598"/>
<text transform="translate(1099.6 739.5) rotate(-35)" font-size="16.9" fill="#7d7d7d" text-anchor="end">Joliet</text>
<rect x="1148.4" y="638.0" width="56.3" height="17.5" fill="#2b3aa1"/><rect x="1148.4" y="655.5" width="56.3" height="67.6" fill="#1c7598"/>
<text transform="translate(1171.2 739.5) rotate(-35)" font-size="16.9" fill="#7d7d7d" text-anchor="end">Lake County</text>
<rect x="1220.0" y="630.4" width="56.3" height="29.9" fill="#2b3aa1"/><rect x="1220.0" y="660.3" width="56.3" height="62.8" fill="#1c7598"/>
<text transform="translate(1242.8 739.5) rotate(-35)" font-size="16.9" fill="#7d7d7d" text-anchor="end">[Default]</text>
<rect x="1291.6" y="644.4" width="56.3" height="16.9" fill="#2b3aa1"/><rect x="1291.6" y="661.3" width="56.3" height="61.8" fill="#1c7598"/>
<text transform="translate(1314.4 739.5) rotate(-35)" font-size="16.9" fill="#7d7d7d" text-anchor="end">Belvidere</text>
<rect x="1363.2" y="685.4" width="56.3" height="14.7" fill="#2b3aa1"/><rect x="1363.2" y="700.1" width="56.3" height="23.0" fill="#1c7598"/>
<text transform="translate(1386.0 739.5) rotate(-35)" font-size="16.9" fill="#7d7d7d" text-anchor="end">Galena</text>
<rect x="1434.8" y="685.4" width="56.3" height="17.8" fill="#2b3aa1"/><rect x="1434.8" y="703.2" width="56.3" height="19.9" fill="#1c7598"/>
<text transform="translate(1457.6 739.5) rotate(-35)" font-size="16.9" fill="#7d7d7d" text-anchor="end">Peoria County</text>
<rect x="1506.4" y="705.9" width="56.3" height="10.1" fill="#2b3aa1"/><rect x="1506.4" y="716" width="56.3" height="7.1" fill="#1c7598"/>
<text transform="translate(1529.2 739.5) rotate(-35)" font-size="16.9" fill="#7d7d7d" text-anchor="end">Woodford County</text>
<rect x="1578.0" y="709.3" width="56.3" height="8.2" fill="#2b3aa1"/><rect x="1578.0" y="717.5" width="56.3" height="5.6" fill="#1c7598"/>
<text transform="translate(1600.8 739.5) rotate(-35)" font-size="16.9" fill="#7d7d7d" text-anchor="end">Tazewell County</text>
<rect x="1649.6" y="716" width="56.3" height="4.0" fill="#2b3aa1"/><rect x="1649.6" y="720" width="56.3" height="3.1" fill="#1c7598"/>
<text transform="translate(1672.4 739.5) rotate(-35)" font-size="16.9" fill="#7d7d7d" text-anchor="end">Dixon</text>
<path d="M1034 569.2L1105.3 585.1L1177.1 578.7L1248.4 607.4L1320.6 579.6L1391.9 623L1463.8 645L1535.4 681.1L1607 675.9L1678.6 684.5" fill="none" stroke="#f2b525" stroke-width="3"/>
<rect x="1027.9" y="563.1" width="12.2" height="12.2" fill="#f2b525"/>
<rect x="1099.2" y="579.0" width="12.2" height="12.2" fill="#f2b525"/>
<rect x="1171.0" y="572.6" width="12.2" height="12.2" fill="#f2b525"/>
<rect x="1242.3000000000002" y="601.3" width="12.2" height="12.2" fill="#f2b525"/>
<rect x="1314.5" y="573.5" width="12.2" height="12.2" fill="#f2b525"/>
<rect x="1385.8000000000002" y="616.9" width="12.2" height="12.2" fill="#f2b525"/>
<rect x="1457.7" y="638.9" width="12.2" height="12.2" fill="#f2b525"/>
<rect x="1529.3000000000002" y="675.0" width="12.2" height="12.2" fill="#f2b525"/>
<rect x="1600.9" y="669.8" width="12.2" height="12.2" fill="#f2b525"/>
<rect x="1672.5" y="678.4" width="12.2" height="12.2" fill="#f2b525"/>
<rect x="1082.00" y="921" width="1.8" height="103" fill="#f3f5f6"/><rect x="1082.15" y="924" width="1.5" height="97" fill="#c6d0d5"/><rect x="1082.15" y="1024" width="1.5" height="265" fill="#fff" fill-opacity=".92"/>
<rect x="1186.90" y="921" width="1.8" height="103" fill="#f3f5f6"/><rect x="1187.05" y="924" width="1.5" height="97" fill="#c6d0d5"/><rect x="1187.05" y="1024" width="1.5" height="265" fill="#fff" fill-opacity=".92"/>
<rect x="1313.00" y="921" width="1.8" height="103" fill="#f3f5f6"/><rect x="1313.15" y="924" width="1.5" height="97" fill="#c6d0d5"/><rect x="1313.15" y="1024" width="1.5" height="265" fill="#fff" fill-opacity=".92"/>
<rect x="1405.40" y="921" width="1.8" height="103" fill="#f3f5f6"/><rect x="1405.55" y="924" width="1.5" height="97" fill="#c6d0d5"/><rect x="1405.55" y="1024" width="1.5" height="265" fill="#fff" fill-opacity=".92"/>
<rect x="1492.90" y="921" width="1.8" height="103" fill="#f3f5f6"/><rect x="1493.05" y="924" width="1.5" height="97" fill="#c6d0d5"/><rect x="1493.05" y="1024" width="1.5" height="265" fill="#fff" fill-opacity=".92"/>
<rect x="1598.70" y="921" width="1.8" height="103" fill="#f3f5f6"/><rect x="1598.85" y="924" width="1.5" height="97" fill="#c6d0d5"/><rect x="1598.85" y="1024" width="1.5" height="265" fill="#fff" fill-opacity=".92"/>
<rect x="1694.20" y="921" width="1.8" height="103" fill="#f3f5f6"/><rect x="1694.35" y="924" width="1.5" height="97" fill="#c6d0d5"/><rect x="1694.35" y="1024" width="1.5" height="265" fill="#fff" fill-opacity=".92"/>
<path d="M911 1013.8L919 1006.1L926.9 1013.8Z" fill="#fff"/>
<clipPath id="sbc"><rect x="1817.2" y="921" width="9.6" height="356"/></clipPath><g clip-path="url(#sbc)"><path d="M1819.9 943L1823.4 937.1L1826.9 943" fill="none" stroke="#383838" stroke-width="1.6"/><path d="M1819.9 1254.6L1823.4 1260.5L1826.9 1254.6" fill="none" stroke="#383838" stroke-width="1.6"/></g>
<path d="M52.6 1342.8L46.6 1348.2L52.6 1353.7Z" fill="#cacaca"/><path d="M77 1342.8L83 1348.2L77 1353.7Z" fill="#cacaca"/>
<g filter="url(#sh)"><path d="M26.8 1241.5L80 1291.5" stroke="#fb4145" stroke-width="9" stroke-linecap="round" fill="none"/><path d="M100.3 1309L87.7 1278.2L68.2 1300.3Z" fill="#fb4145"/></g>
<path d="M0.5 1424.5L2.8 1425.9L5.1 1425.9L6.7 1426.1L9.8 1424.9L11.3 1425.4L12.6 1426.9L15.3 1425.1L16.6 1423.2L18.2 1421.4L20.5 1423.0L23.0 1423.0L25.8 1422.2L29.4 1423.6L32.3 1422.5L34.2 1423.6L36.3 1423.1L39.8 1421.2L41.5 1421.4L45.1 1420.0L47.8 1419.5L49.2 1421.8L52.2 1421.0L53.7 1418.1L56.2 1417.6L59.2 1418.9L60.6 1418.4L62.5 1420.1L64.4 1419.4L66.6 1420.5L68.0 1419.7L69.8 1419.5L71.7 1418.5L74.3 1419.5L76.4 1421.7L78.8 1423.3L80.4 1424.8L83.6 1423.4L86.6 1422.2L90.0 1422.8L92.3 1421.1L95.8 1422.1L97.6 1422.6L99.5 1423.5L100.9 1423.7L104.1 1422.8L107.5 1421.0L109.3 1419.6L111.0 1420.4L112.5 1422.2L116.0 1423.1L118.6 1421.3L119.9 1422.3L123.4 1419.9L126.3 1422.2L127.7 1423.3L131.1 1424.0L134.2 1423.4L137.0 1424.7L139.2 1425.9L141.8 1425.1L144.4 1423.3L147.1 1424.7L150.1 1425.4L152.7 1426.4L154.1 1424.2L156.7 1423.0L159.6 1423.5L163.0 1421.6L164.9 1420.7L166.5 1421.6L168.8 1421.2L171.6 1421.2L174.7 1422.9L176.9 1422.2L178.4 1423.6L181.6 1425.3L183.5 1424.8L185.4 1424.3L188.1 1423.4L191.3 1423.2L192.6 1419.8L195.5 1419.5L198.6 1417.4L199.9 1417.2L201.4 1416.8L204.2 1418.8L207.7 1418.2L210.0 1417.0L212.3 1416.8L214.2 1418.4L216.6 1420.0L218.8 1421.9L220.2 1423.0L221.7 1423.5L225.1 1423.7L228.4 1425.3L230.7 1423.9L233.6 1424.4L236.6 1425.7L240.1 1425.5L243.2 1426.8L246.5 1424.7L248.7 1425.6L251.1 1421.9L254.2 1421.4L257.3 1420.3L259.7 1422.0L262.6 1422.1L266.1 1421.2L268.5 1422.3L271.3 1423.7L273.8 1423.2L277.0 1422.1L280.3 1422.3L282.9 1422.6L285.3 1420.9L288.8 1420.8L291.9 1421.1L294.8 1421.5L297.0 1423.3L298.8 1421.9L301.1 1423.6L303.4 1422.4L306.1 1421.1L309.2 1418.3L312.0 1418.4L314.7 1419.9L316.2 1419.4L317.9 1419.6L320.0 1420.2L321.5 1421.1L324.3 1422.7L326.9 1421.8L329.9 1423.5L331.9 1425.0L333.6 1426.3L335.1 1426.7L337.0 1427.5L339.2 1425.6L341.3 1423.4L343.0 1424.9L346.5 1424.7L349.6 1425.2L351.2 1423.5L352.5 1423.5L355.1 1422.3L356.8 1424.3L360.2 1422.4L363.7 1423.6L365.6 1423.6L367.9 1421.7L370.8 1420.7L373.0 1420.6L374.7 1421.0L376.0 1422.4L378.8 1423.0L381.0 1423.1L384.6 1422.2L388.0 1423.4L391.1 1424.8L394.4 1425.6L397.5 1426.2L398.8 1425.7L400.1 1425.9L402.8 1427.2L405.6 1427.3L408.1 1426.3L411.7 1426.7L414.8 1424.4L417.4 1423.4L419.6 1420.6L421.0 1422.5L423.5 1424.3L426.1 1424.7L429.3 1424.9L432.3 1421.5L434.6 1421.7L437.3 1419.2L439.7 1419.2L441.6 1420.0L443.5 1419.6L444.7 1418.4L446.3 1418.6L449.7 1417.5L453.2 1416.8L456.6 1417.5L460.2 1418.4L463.6 1418.9L467.2 1419.8L468.6 1420.1L470.3 1417.3L472.6 1417.9L474.4 1418.2L477.5 1420.8L481.0 1420.1L482.4 1421.6L485.1 1420.9L488.0 1421.6L490.7 1420.6L492.5 1422.5L495.8 1419.7L498.0 1418.6L500.5 1417.6L503.3 1418.9L505.4 1418.3L507.5 1420.2L508.8 1421.8L511.5 1420.9L513.8 1422.4L515.8 1424.3L517.8 1425.1L521.2 1424.4L522.7 1422.6L524.1 1422.6L526.9 1423.8L528.3 1424.3L529.7 1425.0L532.6 1423.4L534.6 1422.9L536.1 1423.2L539.5 1424.8L541.8 1423.8L543.7 1425.4L547.1 1424.6L549.1 1424.0L551.3 1424.1L554.4 1425.3L556.9 1426.0L560.3 1423.8L562.7 1424.0L566.2 1425.1L567.6 1425.9L569.0 1426.5L572.3 1426.5L573.9 1426.7L575.7 1427.2L578.1 1426.3L580.1 1426.6L582.5 1427.0L585.4 1426.1L588.6 1427.1L591.7 1428.1L595.2 1427.5L598.1 1426.7L600.3 1427.1L603.9 1425.4L605.6 1424.3L609.1 1420.9L611.9 1420.0L613.2 1420.7L616.6 1417.9L618.3 1419.4L621.0 1418.7L622.8 1420.3L624.8 1421.9L627.1 1423.5L630.5 1423.6L634.0 1422.5L635.3 1423.8L637.5 1423.7L639.3 1424.3L641.1 1421.4L644.2 1422.0L645.8 1421.5L647.6 1421.8L650.3 1421.1L652.8 1422.4L654.0 1423.8L657.2 1422.8L660.1 1422.8L662.4 1423.2L665.7 1424.3L667.9 1422.6L671.1 1422.8L673.5 1424.2L675.5 1422.4L677.4 1423.3L679.5 1421.8L681.6 1423.8L684.8 1421.8L686.9 1421.0L689.5 1419.4L693.1 1418.8L695.7 1418.9L698.2 1418.9L700.4 1418.5L702.1 1418.5L705.5 1419.9L707.5 1418.8L709.1 1420.0L712.0 1420.1L715.2 1418.9L716.9 1418.1L719.1 1420.3L721.3 1421.3L724.4 1421.1L726.4 1419.5L728.5 1421.8L731.6 1422.4L732.9 1421.9L735.6 1421.6L738.0 1423.1L740.7 1424.1L744.1 1423.4L746.5 1424.2L750.0 1424.9L753.3 1426.4L756.0 1424.4L757.7 1425.0L759.7 1424.2L762.0 1425.9L763.6 1425.7L766.1 1424.5L769.5 1425.5L772.1 1426.4L774.0 1425.0L776.6 1423.6L779.1 1421.8L780.8 1423.6L783.5 1424.2L786.5 1424.4L789.6 1421.7L791.2 1422.2L792.8 1421.4L795.4 1422.2L796.7 1421.0L800.2 1421.1L802.3 1422.1L805.4 1422.2L808.9 1423.7L811.1 1423.9L814.5 1423.9L816.7 1423.1L818.1 1424.6L821.0 1425.4L823.0 1423.5L824.5 1423.5L826.6 1421.0L828.4 1420.9L830.1 1422.7L833.7 1424.2L835.9 1423.0L838.9 1424.6L840.3 1423.0L842.8 1421.1L844.6 1420.7L845.9 1422.2L848.1 1422.7L849.4 1419.9L851.8 1422.1L854.1 1421.5L857.5 1420.5L860.8 1420.8L862.4 1423.0L864.1 1421.8L867.4 1420.0L869.3 1421.8L872.2 1422.7L875.7 1421.2L877.4 1422.2L879.1 1421.4L881.9 1421.1L884.7 1421.7L886.4 1423.5L889.2 1424.0L890.6 1423.7L893.1 1421.9L895.7 1421.1L898.9 1420.6L901.9 1420.1L904.4 1422.0L908.0 1420.2L910.1 1420.5L911.7 1421.4L913.8 1422.7L916.2 1424.1L919.1 1425.7L920.7 1424.1L923.3 1423.8L926.4 1424.8L928.2 1423.5L930.8 1421.7L933.4 1422.2L936.7 1421.0L937.9 1421.0L940.2 1422.5L941.6 1422.8L944.1 1421.9L945.6 1420.3L947.6 1420.8L949.4 1419.5L952.6 1419.1L954.2 1420.9L957.3 1420.8L959.3 1422.9L960.6 1424.0L964.2 1423.7L967.2 1421.9L968.7 1421.3L970.9 1419.8L974.5 1421.1L976.3 1421.6L978.1 1423.4L980.1 1425.2L982.8 1422.8L984.1 1423.6L987.4 1425.0L989.7 1426.1L991.8 1424.6L993.9 1424.6L995.5 1423.3L997.8 1423.1L1001.4 1424.5L1003.1 1422.7L1005.9 1421.9L1007.2 1421.2L1009.3 1422.3L1011.2 1421.1L1014.6 1422.4L1017.5 1420.6L1019.5 1419.4L1022.8 1420.9L1025.3 1418.2L1026.6 1419.2L1027.9 1419.4L1030.4 1420.7L1032.2 1421.7L1033.7 1421.0L1036.6 1420.9L1039.9 1420.4L1042.0 1419.0L1043.2 1419.8L1046.4 1419.5L1049.2 1418.9L1052.0 1421.2L1055.3 1421.9L1056.7 1421.7L1058.1 1421.2L1060.5 1420.2L1062.6 1419.3L1065.4 1418.3L1067.4 1417.6L1070.0 1418.5L1072.9 1416.8L1074.3 1416.8L1076.7 1417.5L1078.6 1416.8L1080.7 1417.9L1082.5 1417.4L1084.8 1419.9L1086.9 1422.0L1089.9 1422.6L1092.1 1421.8L1095.3 1421.6L1098.7 1419.3L1100.6 1421.6L1102.2 1420.8L1105.0 1419.2L1107.5 1418.7L1109.9 1419.5L1112.6 1421.2L1116.2 1420.9L1119.5 1422.0L1122.3 1423.9L1125.5 1424.3L1127.9 1423.7L1129.8 1423.7L1131.6 1423.0L1133.2 1421.6L1134.5 1420.3L1137.4 1420.5L1140.5 1419.6L1143.8 1418.3L1145.6 1420.1L1147.7 1419.6L1150.6 1419.4L1153.7 1421.1L1156.2 1422.2L1158.9 1423.5L1160.4 1424.1L1162.2 1422.1L1164.8 1424.0L1166.3 1423.6L1169.0 1425.2L1172.6 1421.7L1173.9 1422.8L1177.5 1422.2L1178.7 1422.2L1180.8 1423.5L1184.0 1423.1L1186.7 1424.9L1188.9 1424.9L1192.0 1423.4L1193.4 1422.4L1195.8 1421.9L1197.1 1420.7L1199.8 1420.0L1202.1 1419.5L1203.4 1421.5L1205.4 1420.5L1207.7 1419.7L1211.0 1419.8L1214.2 1418.6L1216.7 1419.7L1218.5 1421.5L1222.1 1423.0L1225.1 1421.2L1226.7 1419.9L1228.7 1419.6L1231.2 1418.5L1232.4 1420.3L1235.5 1420.3L1238.6 1421.7L1242.2 1423.6L1244.4 1422.6L1247.7 1419.6L1249.9 1420.7L1253.0 1421.5L1255.1 1423.3L1257.0 1422.6L1260.0 1423.6L1262.5 1422.4L1264.0 1421.9L1266.2 1419.4L1268.2 1421.6L1269.9 1421.1L1272.9 1423.2L1275.1 1422.2L1277.3 1421.1L1279.2 1423.1L1281.1 1422.5L1284.7 1423.1L1286.8 1422.0L1289.5 1423.6L1292.2 1423.8L1293.7 1424.4L1296.0 1423.9L1298.1 1424.2L1300.7 1422.3L1303.4 1422.8L1306.0 1421.5L1308.3 1422.6L1310.3 1424.6L1312.4 1423.0L1316.0 1422.0L1319.2 1423.8L1322.4 1423.8L1326.0 1425.1L1328.9 1426.0L1331.2 1427.1L1332.9 1427.1L1334.2 1427.7L1336.6 1428.2L1339.9 1427.7L1343.2 1425.8L1345.3 1423.7L1347.4 1424.9L1348.8 1424.3L1352.1 1425.7L1353.4 1424.2L1356.2 1425.0L1357.8 1424.5L1359.1 1423.6L1361.8 1423.9L1364.6 1422.4L1367.5 1421.1L1369.0 1421.8L1371.0 1423.9L1373.9 1423.3L1375.9 1421.9L1378.6 1423.3L1380.8 1423.3L1384.2 1424.1L1386.0 1423.1L1389.3 1424.5L1392.1 1426.0L1394.2 1426.0L1396.5 1425.3L1398.4 1426.8L1400.3 1427.0L1402.1 1425.1L1405.4 1424.5L1407.4 1425.7L1410.1 1423.8L1413.4 1423.2L1415.5 1423.9L1417.5 1425.5L1418.8 1425.1L1420.9 1424.1L1423.7 1425.8L1427.2 1425.1L1430.4 1425.6L1434.0 1425.1L1436.2 1423.8L1439.7 1423.2L1441.3 1424.2L1442.7 1424.6L1445.4 1423.5L1448.5 1424.5L1450.0 1422.5L1453.3 1424.1L1454.5 1424.1L1457.0 1425.1L1458.9 1423.4L1461.5 1421.8L1463.9 1423.1L1465.7 1421.4L1467.4 1421.8L1469.7 1420.5L1473.0 1422.6L1475.4 1423.1L1478.7 1422.8L1479.9 1424.1L1482.9 1422.7L1485.4 1419.8L1488.9 1421.6L1490.2 1420.2L1492.0 1422.2L1494.0 1422.9L1497.3 1423.2L1499.7 1422.8L1501.7 1421.9L1503.7 1422.0L1505.8 1422.0L1507.1 1420.5L1509.6 1420.4L1511.3 1420.3L1513.3 1419.7L1516.3 1418.3L1518.5 1417.0L1521.1 1417.3L1523.7 1417.3L1526.4 1417.4L1528.8 1419.1L1530.1 1418.7L1531.9 1419.0L1535.2 1418.7L1538.0 1421.2L1541.2 1420.7L1544.4 1421.6L1545.7 1420.1L1548.4 1422.1L1551.2 1420.3L1553.8 1418.0L1556.6 1420.2L1558.0 1420.4L1561.0 1420.6L1563.2 1420.2L1566.2 1419.1L1569.4 1419.9L1570.9 1419.6L1574.4 1421.6L1576.1 1422.0L1579.3 1423.6L1581.6 1420.8L1584.4 1421.1L1587.3 1422.4L1588.7 1421.2L1591.3 1420.9L1592.9 1421.6L1595.4 1422.0L1598.6 1422.5L1601.0 1422.0L1603.8 1421.2L1606.8 1420.5L1608.1 1420.4L1611.1 1421.2L1613.6 1423.0L1615.9 1422.0L1618.9 1421.5L1622.1 1419.3L1624.7 1418.5L1628.1 1420.3L1629.6 1419.6L1631.3 1420.5L1632.7 1421.1L1636.1 1422.1L1638.2 1423.1L1640.1 1424.0L1641.9 1422.0L1644.4 1421.4L1646.2 1421.6L1648.1 1421.0L1650.5 1420.0L1653.7 1420.8L1656.3 1421.2L1659.0 1422.5L1660.9 1419.8L1663.9 1420.1L1666.0 1422.2L1668.5 1421.7L1670.2 1420.5L1673.7 1419.2L1677.0 1420.0L1678.5 1419.7L1681.8 1420.7L1683.2 1419.5L1686.0 1421.1L1688.5 1421.5L1690.1 1421.1L1692.5 1422.2L1694.7 1420.7L1697.1 1422.8L1699.6 1422.1L1701.6 1423.9L1705.2 1425.5L1708.4 1423.3L1710.8 1424.0L1713.5 1425.6L1714.9 1427.0L1716.2 1427.9L1719.7 1425.5L1722.5 1425.5L1725.5 1423.3L1726.9 1425.1L1730.1 1424.2L1732.1 1421.1L1734.7 1420.7L1737.6 1420.1L1740.9 1419.1L1742.7 1420.7L1744.7 1421.6L1746.5 1420.9L1749.8 1420.2L1751.7 1421.4L1754.5 1421.8L1755.9 1421.0L1757.7 1423.2L1759.7 1424.7L1763.3 1423.2L1766.4 1422.5L1769.5 1421.8L1772.1 1421.9L1775.3 1419.3L1776.7 1418.5L1778.4 1420.8L1781.8 1422.8L1783.3 1424.5L1785.0 1425.0L1788.3 1426.5L1790.6 1424.6L1792.5 1422.8L1794.1 1421.2L1796.0 1420.0L1798.5 1420.7L1801.5 1422.7L1802.9 1421.2L1804.9 1423.0L1807.3 1422.4L1809.8 1423.6L1813.4 1424.0L1816.6 1422.7L1820.1 1420.9L1823.1 1419.5L1824.7 1420.9L1826.4 1419.3L1828.8 1419.7L1830.4 1416.8L1832.3 1417.1L1834.6 1417.2L1836.7 1418.3L1838.9 1418.8L1840.9 1418.4L1844.3 1420.4L1845.9 1422.6L1847.8 1423.6L1849.5 1422.2L1853.0 1420.8L1855.9 1421.3L1858.3 1421.6L1860.4 1418.9L1862.9 1419.3L1864.4 1419.7L1867.1 1419.4L1869.4 1421.0L1871.1 1422.4L1872.9 1422.5L1875.2 1424.3L1877.5 1423.4L1880.8 1422.7L1882.4 1424.1L1885.6 1425.5L1888.4 1426.0L1891.5 1424.4L1892.0 1428.0" fill="none" stroke="#bdbdbd" stroke-width="1.2" stroke-linejoin="round" transform="translate(0.6 0.9)"/>
<path d="M0.5 1424.5L2.8 1425.9L5.1 1425.9L6.7 1426.1L9.8 1424.9L11.3 1425.4L12.6 1426.9L15.3 1425.1L16.6 1423.2L18.2 1421.4L20.5 1423.0L23.0 1423.0L25.8 1422.2L29.4 1423.6L32.3 1422.5L34.2 1423.6L36.3 1423.1L39.8 1421.2L41.5 1421.4L45.1 1420.0L47.8 1419.5L49.2 1421.8L52.2 1421.0L53.7 1418.1L56.2 1417.6L59.2 1418.9L60.6 1418.4L62.5 1420.1L64.4 1419.4L66.6 1420.5L68.0 1419.7L69.8 1419.5L71.7 1418.5L74.3 1419.5L76.4 1421.7L78.8 1423.3L80.4 1424.8L83.6 1423.4L86.6 1422.2L90.0 1422.8L92.3 1421.1L95.8 1422.1L97.6 1422.6L99.5 1423.5L100.9 1423.7L104.1 1422.8L107.5 1421.0L109.3 1419.6L111.0 1420.4L112.5 1422.2L116.0 1423.1L118.6 1421.3L119.9 1422.3L123.4 1419.9L126.3 1422.2L127.7 1423.3L131.1 1424.0L134.2 1423.4L137.0 1424.7L139.2 1425.9L141.8 1425.1L144.4 1423.3L147.1 1424.7L150.1 1425.4L152.7 1426.4L154.1 1424.2L156.7 1423.0L159.6 1423.5L163.0 1421.6L164.9 1420.7L166.5 1421.6L168.8 1421.2L171.6 1421.2L174.7 1422.9L176.9 1422.2L178.4 1423.6L181.6 1425.3L183.5 1424.8L185.4 1424.3L188.1 1423.4L191.3 1423.2L192.6 1419.8L195.5 1419.5L198.6 1417.4L199.9 1417.2L201.4 1416.8L204.2 1418.8L207.7 1418.2L210.0 1417.0L212.3 1416.8L214.2 1418.4L216.6 1420.0L218.8 1421.9L220.2 1423.0L221.7 1423.5L225.1 1423.7L228.4 1425.3L230.7 1423.9L233.6 1424.4L236.6 1425.7L240.1 1425.5L243.2 1426.8L246.5 1424.7L248.7 1425.6L251.1 1421.9L254.2 1421.4L257.3 1420.3L259.7 1422.0L262.6 1422.1L266.1 1421.2L268.5 1422.3L271.3 1423.7L273.8 1423.2L277.0 1422.1L280.3 1422.3L282.9 1422.6L285.3 1420.9L288.8 1420.8L291.9 1421.1L294.8 1421.5L297.0 1423.3L298.8 1421.9L301.1 1423.6L303.4 1422.4L306.1 1421.1L309.2 1418.3L312.0 1418.4L314.7 1419.9L316.2 1419.4L317.9 1419.6L320.0 1420.2L321.5 1421.1L324.3 1422.7L326.9 1421.8L329.9 1423.5L331.9 1425.0L333.6 1426.3L335.1 1426.7L337.0 1427.5L339.2 1425.6L341.3 1423.4L343.0 1424.9L346.5 1424.7L349.6 1425.2L351.2 1423.5L352.5 1423.5L355.1 1422.3L356.8 1424.3L360.2 1422.4L363.7 1423.6L365.6 1423.6L367.9 1421.7L370.8 1420.7L373.0 1420.6L374.7 1421.0L376.0 1422.4L378.8 1423.0L381.0 1423.1L384.6 1422.2L388.0 1423.4L391.1 1424.8L394.4 1425.6L397.5 1426.2L398.8 1425.7L400.1 1425.9L402.8 1427.2L405.6 1427.3L408.1 1426.3L411.7 1426.7L414.8 1424.4L417.4 1423.4L419.6 1420.6L421.0 1422.5L423.5 1424.3L426.1 1424.7L429.3 1424.9L432.3 1421.5L434.6 1421.7L437.3 1419.2L439.7 1419.2L441.6 1420.0L443.5 1419.6L444.7 1418.4L446.3 1418.6L449.7 1417.5L453.2 1416.8L456.6 1417.5L460.2 1418.4L463.6 1418.9L467.2 1419.8L468.6 1420.1L470.3 1417.3L472.6 1417.9L474.4 1418.2L477.5 1420.8L481.0 1420.1L482.4 1421.6L485.1 1420.9L488.0 1421.6L490.7 1420.6L492.5 1422.5L495.8 1419.7L498.0 1418.6L500.5 1417.6L503.3 1418.9L505.4 1418.3L507.5 1420.2L508.8 1421.8L511.5 1420.9L513.8 1422.4L515.8 1424.3L517.8 1425.1L521.2 1424.4L522.7 1422.6L524.1 1422.6L526.9 1423.8L528.3 1424.3L529.7 1425.0L532.6 1423.4L534.6 1422.9L536.1 1423.2L539.5 1424.8L541.8 1423.8L543.7 1425.4L547.1 1424.6L549.1 1424.0L551.3 1424.1L554.4 1425.3L556.9 1426.0L560.3 1423.8L562.7 1424.0L566.2 1425.1L567.6 1425.9L569.0 1426.5L572.3 1426.5L573.9 1426.7L575.7 1427.2L578.1 1426.3L580.1 1426.6L582.5 1427.0L585.4 1426.1L588.6 1427.1L591.7 1428.1L595.2 1427.5L598.1 1426.7L600.3 1427.1L603.9 1425.4L605.6 1424.3L609.1 1420.9L611.9 1420.0L613.2 1420.7L616.6 1417.9L618.3 1419.4L621.0 1418.7L622.8 1420.3L624.8 1421.9L627.1 1423.5L630.5 1423.6L634.0 1422.5L635.3 1423.8L637.5 1423.7L639.3 1424.3L641.1 1421.4L644.2 1422.0L645.8 1421.5L647.6 1421.8L650.3 1421.1L652.8 1422.4L654.0 1423.8L657.2 1422.8L660.1 1422.8L662.4 1423.2L665.7 1424.3L667.9 1422.6L671.1 1422.8L673.5 1424.2L675.5 1422.4L677.4 1423.3L679.5 1421.8L681.6 1423.8L684.8 1421.8L686.9 1421.0L689.5 1419.4L693.1 1418.8L695.7 1418.9L698.2 1418.9L700.4 1418.5L702.1 1418.5L705.5 1419.9L707.5 1418.8L709.1 1420.0L712.0 1420.1L715.2 1418.9L716.9 1418.1L719.1 1420.3L721.3 1421.3L724.4 1421.1L726.4 1419.5L728.5 1421.8L731.6 1422.4L732.9 1421.9L735.6 1421.6L738.0 1423.1L740.7 1424.1L744.1 1423.4L746.5 1424.2L750.0 1424.9L753.3 1426.4L756.0 1424.4L757.7 1425.0L759.7 1424.2L762.0 1425.9L763.6 1425.7L766.1 1424.5L769.5 1425.5L772.1 1426.4L774.0 1425.0L776.6 1423.6L779.1 1421.8L780.8 1423.6L783.5 1424.2L786.5 1424.4L789.6 1421.7L791.2 1422.2L792.8 1421.4L795.4 1422.2L796.7 1421.0L800.2 1421.1L802.3 1422.1L805.4 1422.2L808.9 1423.7L811.1 1423.9L814.5 1423.9L816.7 1423.1L818.1 1424.6L821.0 1425.4L823.0 1423.5L824.5 1423.5L826.6 1421.0L828.4 1420.9L830.1 1422.7L833.7 1424.2L835.9 1423.0L838.9 1424.6L840.3 1423.0L842.8 1421.1L844.6 1420.7L845.9 1422.2L848.1 1422.7L849.4 1419.9L851.8 1422.1L854.1 1421.5L857.5 1420.5L860.8 1420.8L862.4 1423.0L864.1 1421.8L867.4 1420.0L869.3 1421.8L872.2 1422.7L875.7 1421.2L877.4 1422.2L879.1 1421.4L881.9 1421.1L884.7 1421.7L886.4 1423.5L889.2 1424.0L890.6 1423.7L893.1 1421.9L895.7 1421.1L898.9 1420.6L901.9 1420.1L904.4 1422.0L908.0 1420.2L910.1 1420.5L911.7 1421.4L913.8 1422.7L916.2 1424.1L919.1 1425.7L920.7 1424.1L923.3 1423.8L926.4 1424.8L928.2 1423.5L930.8 1421.7L933.4 1422.2L936.7 1421.0L937.9 1421.0L940.2 1422.5L941.6 1422.8L944.1 1421.9L945.6 1420.3L947.6 1420.8L949.4 1419.5L952.6 1419.1L954.2 1420.9L957.3 1420.8L959.3 1422.9L960.6 1424.0L964.2 1423.7L967.2 1421.9L968.7 1421.3L970.9 1419.8L974.5 1421.1L976.3 1421.6L978.1 1423.4L980.1 1425.2L982.8 1422.8L984.1 1423.6L987.4 1425.0L989.7 1426.1L991.8 1424.6L993.9 1424.6L995.5 1423.3L997.8 1423.1L1001.4 1424.5L1003.1 1422.7L1005.9 1421.9L1007.2 1421.2L1009.3 1422.3L1011.2 1421.1L1014.6 1422.4L1017.5 1420.6L1019.5 1419.4L1022.8 1420.9L1025.3 1418.2L1026.6 1419.2L1027.9 1419.4L1030.4 1420.7L1032.2 1421.7L1033.7 1421.0L1036.6 1420.9L1039.9 1420.4L1042.0 1419.0L1043.2 1419.8L1046.4 1419.5L1049.2 1418.9L1052.0 1421.2L1055.3 1421.9L1056.7 1421.7L1058.1 1421.2L1060.5 1420.2L1062.6 1419.3L1065.4 1418.3L1067.4 1417.6L1070.0 1418.5L1072.9 1416.8L1074.3 1416.8L1076.7 1417.5L1078.6 1416.8L1080.7 1417.9L1082.5 1417.4L1084.8 1419.9L1086.9 1422.0L1089.9 1422.6L1092.1 1421.8L1095.3 1421.6L1098.7 1419.3L1100.6 1421.6L1102.2 1420.8L1105.0 1419.2L1107.5 1418.7L1109.9 1419.5L1112.6 1421.2L1116.2 1420.9L1119.5 1422.0L1122.3 1423.9L1125.5 1424.3L1127.9 1423.7L1129.8 1423.7L1131.6 1423.0L1133.2 1421.6L1134.5 1420.3L1137.4 1420.5L1140.5 1419.6L1143.8 1418.3L1145.6 1420.1L1147.7 1419.6L1150.6 1419.4L1153.7 1421.1L1156.2 1422.2L1158.9 1423.5L1160.4 1424.1L1162.2 1422.1L1164.8 1424.0L1166.3 1423.6L1169.0 1425.2L1172.6 1421.7L1173.9 1422.8L1177.5 1422.2L1178.7 1422.2L1180.8 1423.5L1184.0 1423.1L1186.7 1424.9L1188.9 1424.9L1192.0 1423.4L1193.4 1422.4L1195.8 1421.9L1197.1 1420.7L1199.8 1420.0L1202.1 1419.5L1203.4 1421.5L1205.4 1420.5L1207.7 1419.7L1211.0 1419.8L1214.2 1418.6L1216.7 1419.7L1218.5 1421.5L1222.1 1423.0L1225.1 1421.2L1226.7 1419.9L1228.7 1419.6L1231.2 1418.5L1232.4 1420.3L1235.5 1420.3L1238.6 1421.7L1242.2 1423.6L1244.4 1422.6L1247.7 1419.6L1249.9 1420.7L1253.0 1421.5L1255.1 1423.3L1257.0 1422.6L1260.0 1423.6L1262.5 1422.4L1264.0 1421.9L1266.2 1419.4L1268.2 1421.6L1269.9 1421.1L1272.9 1423.2L1275.1 1422.2L1277.3 1421.1L1279.2 1423.1L1281.1 1422.5L1284.7 1423.1L1286.8 1422.0L1289.5 1423.6L1292.2 1423.8L1293.7 1424.4L1296.0 1423.9L1298.1 1424.2L1300.7 1422.3L1303.4 1422.8L1306.0 1421.5L1308.3 1422.6L1310.3 1424.6L1312.4 1423.0L1316.0 1422.0L1319.2 1423.8L1322.4 1423.8L1326.0 1425.1L1328.9 1426.0L1331.2 1427.1L1332.9 1427.1L1334.2 1427.7L1336.6 1428.2L1339.9 1427.7L1343.2 1425.8L1345.3 1423.7L1347.4 1424.9L1348.8 1424.3L1352.1 1425.7L1353.4 1424.2L1356.2 1425.0L1357.8 1424.5L1359.1 1423.6L1361.8 1423.9L1364.6 1422.4L1367.5 1421.1L1369.0 1421.8L1371.0 1423.9L1373.9 1423.3L1375.9 1421.9L1378.6 1423.3L1380.8 1423.3L1384.2 1424.1L1386.0 1423.1L1389.3 1424.5L1392.1 1426.0L1394.2 1426.0L1396.5 1425.3L1398.4 1426.8L1400.3 1427.0L1402.1 1425.1L1405.4 1424.5L1407.4 1425.7L1410.1 1423.8L1413.4 1423.2L1415.5 1423.9L1417.5 1425.5L1418.8 1425.1L1420.9 1424.1L1423.7 1425.8L1427.2 1425.1L1430.4 1425.6L1434.0 1425.1L1436.2 1423.8L1439.7 1423.2L1441.3 1424.2L1442.7 1424.6L1445.4 1423.5L1448.5 1424.5L1450.0 1422.5L1453.3 1424.1L1454.5 1424.1L1457.0 1425.1L1458.9 1423.4L1461.5 1421.8L1463.9 1423.1L1465.7 1421.4L1467.4 1421.8L1469.7 1420.5L1473.0 1422.6L1475.4 1423.1L1478.7 1422.8L1479.9 1424.1L1482.9 1422.7L1485.4 1419.8L1488.9 1421.6L1490.2 1420.2L1492.0 1422.2L1494.0 1422.9L1497.3 1423.2L1499.7 1422.8L1501.7 1421.9L1503.7 1422.0L1505.8 1422.0L1507.1 1420.5L1509.6 1420.4L1511.3 1420.3L1513.3 1419.7L1516.3 1418.3L1518.5 1417.0L1521.1 1417.3L1523.7 1417.3L1526.4 1417.4L1528.8 1419.1L1530.1 1418.7L1531.9 1419.0L1535.2 1418.7L1538.0 1421.2L1541.2 1420.7L1544.4 1421.6L1545.7 1420.1L1548.4 1422.1L1551.2 1420.3L1553.8 1418.0L1556.6 1420.2L1558.0 1420.4L1561.0 1420.6L1563.2 1420.2L1566.2 1419.1L1569.4 1419.9L1570.9 1419.6L1574.4 1421.6L1576.1 1422.0L1579.3 1423.6L1581.6 1420.8L1584.4 1421.1L1587.3 1422.4L1588.7 1421.2L1591.3 1420.9L1592.9 1421.6L1595.4 1422.0L1598.6 1422.5L1601.0 1422.0L1603.8 1421.2L1606.8 1420.5L1608.1 1420.4L1611.1 1421.2L1613.6 1423.0L1615.9 1422.0L1618.9 1421.5L1622.1 1419.3L1624.7 1418.5L1628.1 1420.3L1629.6 1419.6L1631.3 1420.5L1632.7 1421.1L1636.1 1422.1L1638.2 1423.1L1640.1 1424.0L1641.9 1422.0L1644.4 1421.4L1646.2 1421.6L1648.1 1421.0L1650.5 1420.0L1653.7 1420.8L1656.3 1421.2L1659.0 1422.5L1660.9 1419.8L1663.9 1420.1L1666.0 1422.2L1668.5 1421.7L1670.2 1420.5L1673.7 1419.2L1677.0 1420.0L1678.5 1419.7L1681.8 1420.7L1683.2 1419.5L1686.0 1421.1L1688.5 1421.5L1690.1 1421.1L1692.5 1422.2L1694.7 1420.7L1697.1 1422.8L1699.6 1422.1L1701.6 1423.9L1705.2 1425.5L1708.4 1423.3L1710.8 1424.0L1713.5 1425.6L1714.9 1427.0L1716.2 1427.9L1719.7 1425.5L1722.5 1425.5L1725.5 1423.3L1726.9 1425.1L1730.1 1424.2L1732.1 1421.1L1734.7 1420.7L1737.6 1420.1L1740.9 1419.1L1742.7 1420.7L1744.7 1421.6L1746.5 1420.9L1749.8 1420.2L1751.7 1421.4L1754.5 1421.8L1755.9 1421.0L1757.7 1423.2L1759.7 1424.7L1763.3 1423.2L1766.4 1422.5L1769.5 1421.8L1772.1 1421.9L1775.3 1419.3L1776.7 1418.5L1778.4 1420.8L1781.8 1422.8L1783.3 1424.5L1785.0 1425.0L1788.3 1426.5L1790.6 1424.6L1792.5 1422.8L1794.1 1421.2L1796.0 1420.0L1798.5 1420.7L1801.5 1422.7L1802.9 1421.2L1804.9 1423.0L1807.3 1422.4L1809.8 1423.6L1813.4 1424.0L1816.6 1422.7L1820.1 1420.9L1823.1 1419.5L1824.7 1420.9L1826.4 1419.3L1828.8 1419.7L1830.4 1416.8L1832.3 1417.1L1834.6 1417.2L1836.7 1418.3L1838.9 1418.8L1840.9 1418.4L1844.3 1420.4L1845.9 1422.6L1847.8 1423.6L1849.5 1422.2L1853.0 1420.8L1855.9 1421.3L1858.3 1421.6L1860.4 1418.9L1862.9 1419.3L1864.4 1419.7L1867.1 1419.4L1869.4 1421.0L1871.1 1422.4L1872.9 1422.5L1875.2 1424.3L1877.5 1423.4L1880.8 1422.7L1882.4 1424.1L1885.6 1425.5L1888.4 1426.0L1891.5 1424.4L1892.0 1428.0" fill="none" stroke="#929292" stroke-width="1.4" stroke-linejoin="round"/>
</svg>
</div>
</body></html>
